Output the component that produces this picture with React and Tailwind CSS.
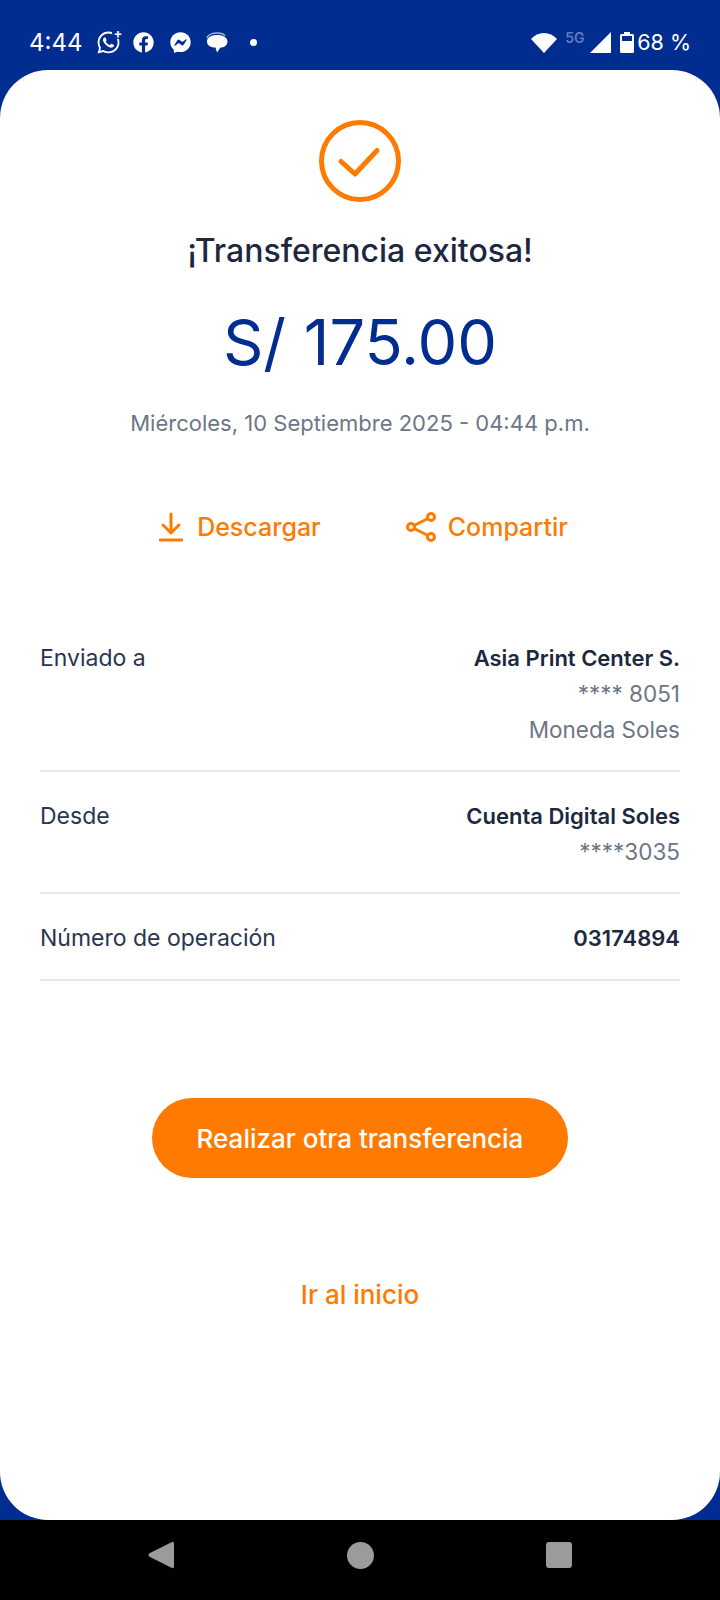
import { FaFacebook, FaFacebookMessenger, FaWhatsapp } from 'react-icons/fa';

function StatusBar() {
  return (
    <div className="h-[70px] flex items-center justify-between pl-[29px] pr-[29px] pt-[15px] text-white">
      <div className="flex items-center">
        <span className="text-[24px] leading-none w-[67px]">4:44</span>
        <div className="relative w-[25px] h-[25px]">
          <FaWhatsapp className="w-[25px] h-[25px]" />
          <span className="absolute -top-[3px] -right-[3px] text-[13px] leading-none font-bold bg-[#002d8f] rounded-full w-[12px] h-[12px] flex items-center justify-center">+</span>
        </div>
        <FaFacebook className="w-[21px] h-[21px] ml-[12px]" />
        <FaFacebookMessenger className="w-[21px] h-[21px] ml-[16px]" />
        <svg className="w-[22px] h-[22px] ml-[15px]" viewBox="0 0 22 22">
          <path d="M1 6 C2 2.500 7 1 11 1 C15 1 18 2 19 4" fill="none" stroke="#9fb2d9" strokeWidth="1.5" />
          <path d="M11 3 C17 3 21.500 5.500 21.500 9.500 C21.500 13.500 18 15.500 14.500 15.500 L11 20.500 L9.500 15.500 C5 15.500 1 13.500 1 9.500 C1 5.500 5 3 11 3 Z" fill="#ffffff" />
        </svg>
        <span className="w-[7px] h-[7px] rounded-full bg-white ml-[22px]" />
      </div>
      <div className="flex items-center">
        <svg className="w-[26px] h-[20px]" viewBox="0 0 26 20">
          <path d="M0 6 C7 -2 19 -2 26 6 L13 20 Z" fill="#ffffff" />
        </svg>
        <span className="text-[14px] leading-none font-semibold text-[#5d7cc0] ml-[8px] -mt-[10px] w-[25px]">5G</span>
        <svg className="w-[21px] h-[21px]" viewBox="0 0 21 21">
          <path d="M21 0 V21 H0 Z" fill="#ffffff" />
        </svg>
        <svg className="w-[14px] h-[21px] ml-[9px]" viewBox="0 0 14 21">
          <path d="M4 0 H10 V2 H12.500 Q14 2 14 3.500 V19.500 Q14 21 12.500 21 H1.500 Q0 21 0 19.500 V3.500 Q0 2 1.500 2 H4 Z" fill="#ffffff" />
          <rect x="2" y="4" width="10" height="5" fill="#002d8f" />
        </svg>
        <span className="text-[21.500px] leading-none ml-[3px]">68 %</span>
      </div>
    </div>
  );
}

function DetailRow({ label, title, lines = [], className }) {
  return (
    <div className={`flex justify-between border-b-2 border-[#e6e8eb] ${className}`}>
      <span className="text-[23px] leading-[36px] text-[#2a3550]">{label}</span>
      <div className="text-right">
        <p className="text-[22px] leading-[36px] font-semibold text-[#1d2840]">{title}</p>
        {lines.map(line => (
          <p key={line} className="text-[22.500px] leading-[36px] text-[#6c7686]">{line}</p>
        ))}
      </div>
    </div>
  );
}

function NavBar() {
  return (
    <div className="h-[80px] bg-black flex items-center justify-center pb-[10px]">
      <div className="w-[720px] flex items-center justify-between pl-[148px] pr-[148px]">
        <svg className="w-[26px] h-[28px]" viewBox="0 0 26 28">
          <path d="M24 1 Q26 0 26 3 V25 Q26 28 24 27 L1 15.500 Q0 14 1 12.500 Z" fill="#9b9b9b" />
        </svg>
        <span className="w-[27px] h-[27px] rounded-full bg-[#9b9b9b]" />
        <span className="w-[26px] h-[26px] rounded-[3px] bg-[#9b9b9b]" />
      </div>
    </div>
  );
}

export default function App() {
  return (
    <div className="h-[1600px] flex flex-col bg-[#002d8f]" style={{ fontFamily: 'Inter, "Open Sans", sans-serif' }}>
      <StatusBar />

      <div className="h-[1450px] bg-white rounded-[48px] flex flex-col items-center pt-[50px]">
        <svg className="w-[82px] h-[82px]" viewBox="0 0 82 82" fill="none" stroke="#ff7a00">
          <circle cx="41" cy="41" r="38.500" strokeWidth="5" />
          <path d="M22 41.500 L36 54 L58 30.500" strokeWidth="5" strokeLinecap="round" strokeLinejoin="round" />
        </svg>

        <h1 className="mt-[29px] text-[32px] leading-[40px] font-medium text-[#1d2840]">¡Transferencia exitosa!</h1>
        <p className="mt-[31px] text-[63px] leading-[80px] text-[#002d8f]">S/ 175.00</p>
        <p className="mt-[25px] text-[22px] leading-[32px] text-[#6c7686]">Miércoles, 10 Septiembre 2025 - 04:44 p.m.</p>

        <div className="mt-[72px] ml-[7px] flex items-center text-[#ff7a00] text-[25px] leading-[32px] font-medium">
          <svg className="w-[24px] h-[30px]" viewBox="0 0 24 30" fill="none" stroke="currentColor" strokeWidth="3" strokeLinecap="round" strokeLinejoin="round">
            <path d="M12 2 V20 M4 13 L12 21 L20 13 M1 28 H23" />
          </svg>
          <span className="ml-[14px]">Descargar</span>
          <svg className="w-[30px] h-[30px] ml-[85px]" viewBox="0 0 30 30" fill="none" stroke="currentColor" strokeWidth="3">
            <circle cx="5" cy="15" r="3.500" />
            <circle cx="25" cy="5" r="3.500" />
            <circle cx="25" cy="25" r="3.500" />
            <path d="M8 13.500 L22 6.500 M8 16.500 L22 23.500" />
          </svg>
          <span className="ml-[12px]">Compartir</span>
        </div>

        <div className="mt-[97px] w-[640px] flex flex-col">
          <DetailRow label="Enviado a" title="Asia Print Center S." lines={['**** 8051', 'Moneda Soles']} className="h-[132px]" />
          <DetailRow label="Desde" title="Cuenta Digital Soles" lines={['****3035']} className="h-[122px] pt-[26px]" />
          <DetailRow label="Número de operación" title="03174894" className="h-[87px] pt-[26px]" />
        </div>

        <button className="mt-[117px] w-[416px] h-[80px] rounded-full bg-[#ff7a00] text-white text-[26px] font-medium">
          Realizar otra transferencia
        </button>
        <a className="mt-[101px] text-[26px] leading-[32px] font-medium text-[#ff7a00]">Ir al inicio</a>
      </div>

      <NavBar />
    </div>
  );
}
